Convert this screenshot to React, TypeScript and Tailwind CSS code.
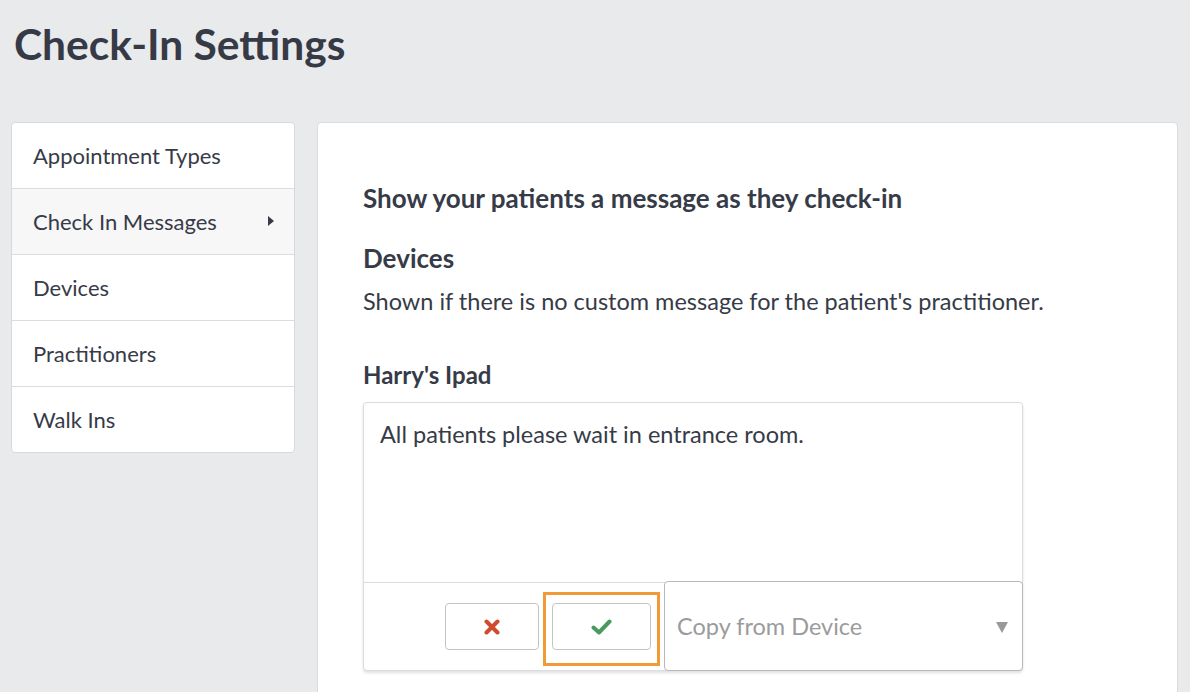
import React from 'react';

const navItems = ['Appointment Types', 'Check In Messages', 'Devices', 'Practitioners', 'Walk Ins'];

const App = () => {
  return (
    <div className="w-[1190px] h-[692px] overflow-hidden bg-[#e9eaec] text-[#363b47]" style={{ fontFamily: 'Lato, "Open Sans", sans-serif' }}>
      <h1 className="pl-[14px] pt-[20px] text-[42.5px] font-bold leading-[48px] text-[#353a46]">Check-In Settings</h1>

      <div className="flex items-start gap-[22px] pl-[11px] pt-[54px]">
        {/* Sidebar */}
        <div className="w-[284px] bg-white border border-[#d9d9d9] rounded-[4px] overflow-hidden">
          {navItems.map((item, i) => (
            <div
              key={item}
              className={`flex items-center justify-between pl-[21px] pr-[19px] pb-px text-[22px] ${i > 0 ? 'h-[66px] border-t border-[#dcdcdc]' : 'h-[65px]'} ${i === 1 ? 'bg-[#f7f7f7]' : ''}`}
            >
              <span>{item}</span>
              {i === 1 && (
                <svg width="8" height="12" viewBox="0 0 8 12">
                  <path d="M1 1 L7 6 L1 11 Z" fill="#363b47" />
                </svg>
              )}
            </div>
          ))}
        </div>

        {/* Main panel */}
        <div className="w-[861px] h-[600px] bg-white border border-[#dcdcdc] rounded-[4px] pl-[45px] pt-[59px]">
          <h2 className="text-[26px] font-bold leading-[32px]">Show your patients a message as they check-in</h2>
          <h3 className="mt-[28px] text-[26px] font-bold leading-[32px]">Devices</h3>
          <p className="mt-[13px] text-[23.5px] leading-[29px]">Shown if there is no custom message for the patient's practitioner.</p>
          <h4 className="mt-[45px] text-[24px] font-bold leading-[28px]">Harry's Ipad</h4>

          <div className="mt-[13px] w-[660px] bg-white border border-[#dcdcdc] rounded-[4px] shadow-[0_2px_3px_rgba(0,0,0,0.12)]">
            <div className="h-[179px] px-[16px] pt-[17px] text-[23.5px] leading-[28px]">All patients please wait in entrance room.</div>
            <div className="flex items-stretch h-[88px] border-t border-[#dcdcdc]">
              <div className="flex-1 flex items-start justify-end gap-[4px] pr-[4px]">
                <button className="mt-[20px] w-[94px] h-[47px] border border-[#c4c4c4] rounded-[4px] bg-white flex items-center justify-center">
                  <svg width="16" height="16" viewBox="0 0 16 16">
                    <path d="M2.5 2.5 L13.5 13.5 M13.5 2.5 L2.5 13.5" stroke="#cf4a2e" strokeWidth="4" strokeLinecap="round" />
                  </svg>
                </button>
                <div className="mt-[9px] border-[3px] border-[#f09a38] px-[6px] pt-[8px] pb-[13px]">
                  <button className="w-[99px] h-[47px] border border-[#c4c4c4] rounded-[4px] bg-white flex items-center justify-center">
                    <svg width="21" height="16" viewBox="0 0 21 16">
                      <path d="M2.5 8.5 L8 13.5 L18.5 2.5" fill="none" stroke="#4a9a5e" strokeWidth="4" strokeLinecap="round" strokeLinejoin="round" />
                    </svg>
                  </button>
                </div>
              </div>
              <div className="w-[359px] -mt-[2px] -mr-px -mb-px border border-[#b8b8bc] rounded-[4px] bg-white flex items-center justify-between pl-[12px] pr-[14px] pt-[2px]">
                <span className="text-[23.5px] text-[#9b9b9b]">Copy from Device</span>
                <svg width="12" height="11" viewBox="0 0 12 11">
                  <path d="M0 0 L12 0 L6 11 Z" fill="#999999" />
                </svg>
              </div>
            </div>
          </div>
        </div>
      </div>
    </div>
  );
};

export default App;
